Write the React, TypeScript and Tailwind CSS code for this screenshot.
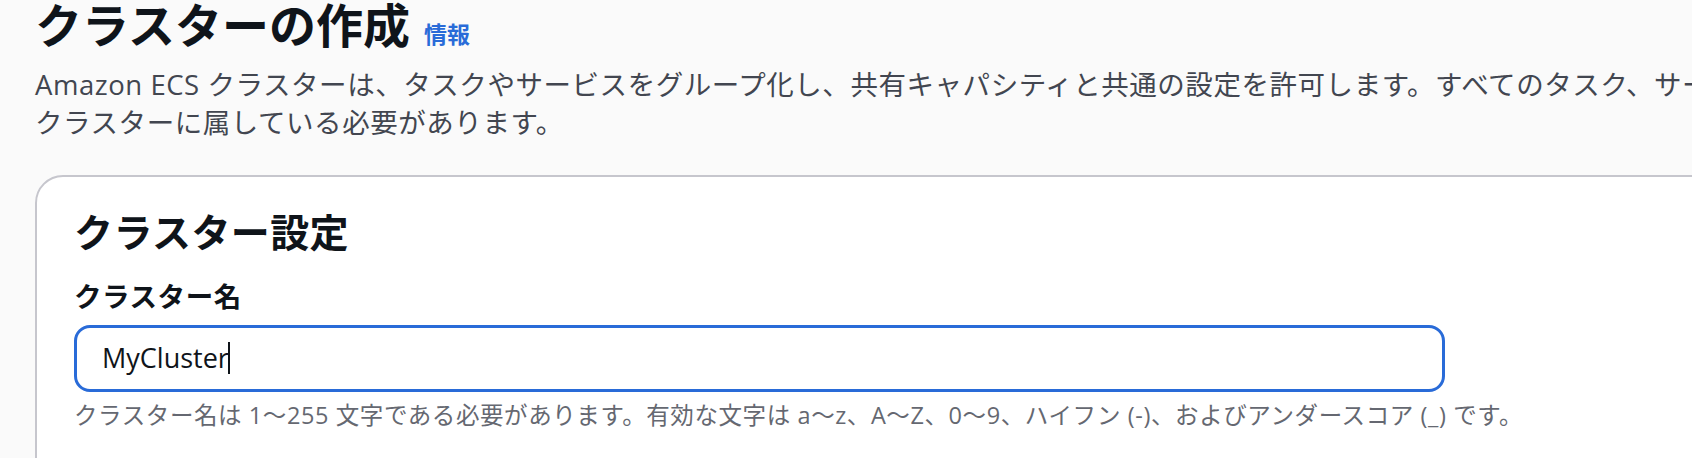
export default function App() {
  return (
    <div className="w-[1692px] h-[458px] overflow-hidden bg-[#fafafa] font-['Open_Sans','Noto_Sans_CJK_JP',sans-serif]">
      <div className="pl-[35px]">
        <div className="flex items-baseline">
          <h1 className="text-[47px] leading-[50px] font-bold text-[#0f141a]">
            クラスターの作成
          </h1>
          <a className="ml-[14px] text-[23px] font-bold text-[#296bd8]">情報</a>
        </div>
        <p className="mt-[14px] text-[27.5px] leading-[38px] tracking-[0.02em] text-[#424650] whitespace-nowrap">
          Amazon ECS
          クラスターは、タスクやサービスをグループ化し、共有キャパシティと共通の設定を許可します。すべてのタスク、サービス、キャパシティは、
          <br />
          クラスターに属している必要があります。
        </p>

        <div className="mt-[33px] w-[1760px] h-[400px] rounded-t-[28px] border-2 border-[#c6c6cd] bg-white pl-[37px] pt-[32px]">
          <h2 className="text-[39px] leading-[46px] font-bold tracking-[0.01em] text-[#0f141a]">
            クラスター設定
          </h2>
          <div className="mt-[23px]">
            <label className="block text-[27.5px] leading-[38px] font-bold tracking-[0.02em] text-[#0f141a]">
              クラスター名
            </label>
            <div className="mt-[9px] w-[1371px] h-[67px] rounded-[16px] border-[3px] border-[#296bd8] bg-white flex items-center pl-[25px]">
              <span className="text-[27px] leading-[38px] text-[#0f141a]">MyCluster</span>
              <span className="-ml-[1px] w-[2px] h-[32px] bg-[#0f141a]" />
            </div>
            <p className="mt-[8px] text-[23.5px] leading-[31px] tracking-[0.025em] text-[#656871] whitespace-nowrap">
              クラスター名は 1〜255 文字である必要があります。有効な文字は a〜z、A〜Z、0〜9、ハイフン (-)、およびアンダースコア (_) です。
            </p>
          </div>
        </div>
      </div>
    </div>
  )
}
